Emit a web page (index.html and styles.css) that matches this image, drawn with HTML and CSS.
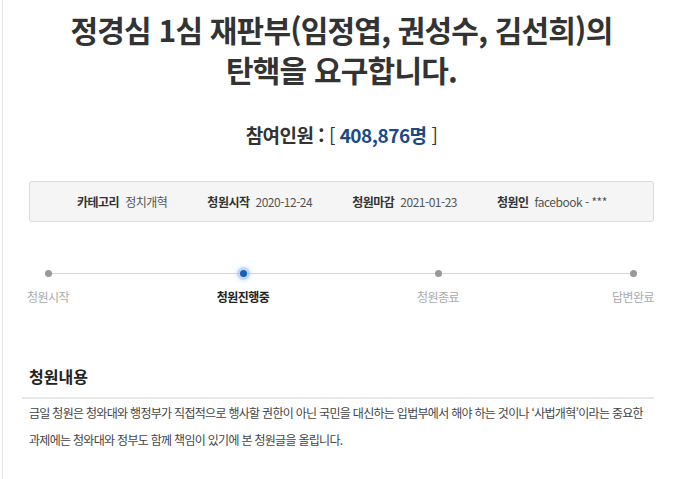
FILE: index.html
```html
<!DOCTYPE html>
<html lang="ko">
<head>
<meta charset="utf-8">
<link rel="stylesheet" href="styles.css">
</head>
<body>
<div class="page">
  <h1 class="title">정경심 1심 재판부(임정엽, 권성수, 김선희)의<br>탄핵을 요구합니다.</h1>
  <div class="count"><span class="count-label">참여인원 :</span> <span class="br">[</span> <span class="count-num">408,876명</span> <span class="br">]</span></div>
  <ul class="info">
    <li><b>카테고리</b><span>정치개혁</span></li>
    <li><b>청원시작</b><span>2020-12-24</span></li>
    <li><b>청원마감</b><span>2021-01-23</span></li>
    <li><b>청원인</b><span>facebook - ***</span></li>
  </ul>
  <div class="steps">
    <div class="track"></div>
    <div class="step"><i class="dot"></i><span>청원시작</span></div>
    <div class="step active"><i class="dot"></i><span>청원진행중</span></div>
    <div class="step"><i class="dot"></i><span>청원종료</span></div>
    <div class="step"><i class="dot"></i><span>답변완료</span></div>
  </div>
  <h2 class="sec">청원내용</h2>
  <p class="body">금일 청원은 청와대와 행정부가 직접적으로 행사할 권한이 아닌 국민을 대신하는 입법부에서 해야 하는 것이나 ‘사법개혁’이라는 중요한 과제에는 청와대와 정부도 함께 책임이 있기에 본 청원글을 올립니다.</p>
</div>
</body>
</html>
```

FILE: styles.css
```css
html, body {
  margin: 0;
  padding: 0;
  background: #fff;
}
body {
  font-family: "Noto Sans CJK KR", "Noto Sans", sans-serif;
  color: #333;
}
.page {
  margin-left: 2px;
  border-left: 1px solid #e6e6e6;
  min-height: 479px;
  padding: 0 26px 0 26px;
  box-sizing: border-box;
}
.title {
  margin: 0;
  padding-top: 9px;
  text-align: center;
  font-size: 30px;
  font-weight: 700;
  line-height: 40px;
  letter-spacing: -0.8px;
  color: #333;
}
.count {
  margin-top: 32px;
  text-align: center;
  font-size: 19px;
  line-height: 28px;
  letter-spacing: -0.5px;
}
.count-label { font-weight: 700; color: #333; }
.br { font-weight: 400; color: #333; }
.count-num { font-weight: 700; color: #1b4a86; }
.info {
  list-style: none;
  margin: 32px 0 0 0;
  height: 41px;
  box-sizing: border-box;
  background: #f5f5f5;
  border: 1px solid #dcdcdc;
  border-radius: 3px;
  display: flex;
  align-items: center;
  padding: 0 0 0 47px;
  font-size: 12px;
  letter-spacing: -0.5px;
}
.info li {
  display: flex;
  gap: 6px;
  margin-right: 40px;
  white-space: nowrap;
  flex-shrink: 0;
}
.info b { color: #333; font-weight: 700; }
.info span { color: #555; }
.steps {
  position: relative;
  display: flex;
  justify-content: space-between;
  margin: 48px -9px 0 -11px;
  padding: 0;
}
.track {
  position: absolute;
  left: 30px;
  right: 30px;
  top: 3px;
  height: 1px;
  background: #d5d5d5;
}
.step {
  position: relative;
  width: 60px;
  display: flex;
  flex-direction: column;
  align-items: center;
  font-size: 12px;
  color: #aaa;
  letter-spacing: -0.5px;
}
.dot {
  width: 7px;
  height: 7px;
  border-radius: 50%;
  background: #999;
  display: block;
}
.step span { margin-top: 11px; line-height: 18px; }
.step.active { color: #222; font-weight: 700; }
.step.active .dot {
  background: #1560b8;
  box-shadow: 0 0 0 3px rgba(120, 170, 240, 0.35), 0 0 3px 5px rgba(150, 190, 245, 0.2);
}
.sec {
  margin: 59px 0 0 0;
  font-size: 16px;
  font-weight: 700;
  line-height: 22px;
  padding-bottom: 10px;
  border-bottom: 2px solid #e8e8e8;
  color: #222;
  margin-left: -7px;
  padding-left: 7px;
}
.body {
  margin: 0;
  font-size: 12px;
  line-height: 27px;
  color: #444;
  letter-spacing: -0.7px;
}
```
